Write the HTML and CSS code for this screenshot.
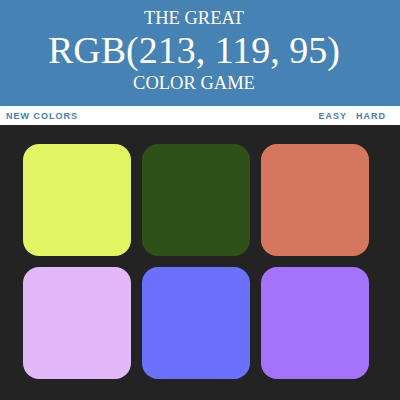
FILE: index.html
```html
<!DOCTYPE html>
<html>
<head>
<meta charset="utf-8">
<title>Color Game</title>
<link rel="stylesheet" href="styles.css">
</head>
<body>
<h1 class="title">
  <span class="title-small">The Great</span>
  <span class="title-rgb">RGB(213, 119, 95)</span>
  <span class="title-small">Color Game</span>
</h1>
<div class="stripe">
  <button class="btn">New Colors</button>
  <span class="message"></span>
  <div class="modes">
    <button class="btn">Easy</button>
    <button class="btn">Hard</button>
  </div>
</div>
<div class="board">
  <div class="square sq1"></div>
  <div class="square sq2"></div>
  <div class="square sq3"></div>
  <div class="square sq4"></div>
  <div class="square sq5"></div>
  <div class="square sq6"></div>
</div>
</body>
</html>
```
FILE: styles.css
```css
html, body {
  margin: 0;
  padding: 0;
  background: #232323;
}
.title {
  margin: 0;
  padding: 8px 12px 12px 0;
  background: #4682b4;
  color: #ffffff;
  text-align: center;
  font-family: "Liberation Serif", "Times New Roman", serif;
  font-weight: normal;
  text-transform: uppercase;
  display: flex;
  flex-direction: column;
  align-items: center;
}
.title-small {
  font-size: 18.5px;
  line-height: 1.149;
}
.title-rgb {
  font-size: 38px;
  line-height: 1.149;
}
.stripe {
  background: #ffffff;
  height: 19px;
  display: flex;
  align-items: center;
  justify-content: space-between;
  padding: 0 14px 0 6px;
}
.btn {
  border: none;
  background: none;
  padding: 0;
  margin: 0;
  font-family: "Liberation Sans", Arial, sans-serif;
  font-size: 9px;
  font-weight: bold;
  letter-spacing: 1px;
  text-transform: uppercase;
  color: #4a7cad;
}
.modes {
  display: flex;
  gap: 9px;
}
.board {
  display: grid;
  grid-template-columns: repeat(3, 108px);
  grid-auto-rows: 112px;
  column-gap: 11px;
  row-gap: 11px;
  padding: 19px 0 0 23px;
}
.square {
  border-radius: 16px;
}
.sq1 { background: #e2f562; }
.sq2 { background: #2d5117; }
.sq3 { background: #d5775f; }
.sq4 { background: #e2b8fb; }
.sq5 { background: #6b71fd; }
.sq6 { background: #a573fb; }
```
